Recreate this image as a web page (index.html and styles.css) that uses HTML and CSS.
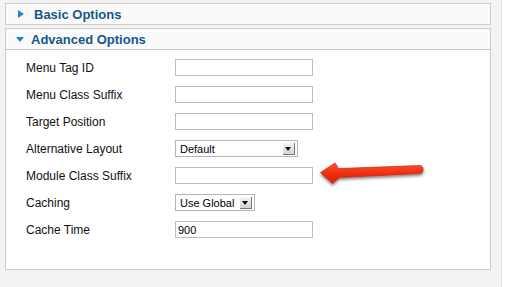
FILE: index.html
```html
<!DOCTYPE html>
<html>
<head>
  <title>Module Options</title>
  <link rel="stylesheet" href="styles.css">
</head>
<body>

  <div class="page">

    <div class="panel">
      <div class="panel-head">
        <span class="toggle closed"></span>
        <h3>Basic Options</h3>
      </div>
    </div>

    <div class="panel">
      <div class="panel-head">
        <span class="toggle open"></span>
        <h3>Advanced Options</h3>
      </div>

      <div class="panel-body">
        <div class="row">
          <label>Menu Tag ID</label>
          <input type="text" class="field">
        </div>
        <div class="row">
          <label>Menu Class Suffix</label>
          <input type="text" class="field">
        </div>
        <div class="row">
          <label>Target Position</label>
          <input type="text" class="field">
        </div>
        <div class="row">
          <label>Alternative Layout</label>
          <div class="select wide">
            <span class="select-text">Default</span>
            <span class="select-btn"></span>
          </div>
        </div>
        <div class="row">
          <label>Module Class Suffix</label>
          <input type="text" class="field">
        </div>
        <div class="row">
          <label>Caching</label>
          <div class="select narrow">
            <span class="select-text">Use Global</span>
            <span class="select-btn"></span>
          </div>
        </div>
        <div class="row">
          <label>Cache Time</label>
          <input type="text" class="field" value="900">
        </div>
      </div>
    </div>

    <!-- callout arrow pointing at Module Class Suffix -->
    <svg class="callout" width="130" height="35" viewBox="0 0 130 35">
      <defs>
        <linearGradient id="red" x1="0" y1="0" x2="0" y2="1">
          <stop offset="0" stop-color="#ff5434"/>
          <stop offset="0.5" stop-color="#ef2e10"/>
          <stop offset="1" stop-color="#d42408"/>
        </linearGradient>
        <filter id="shadow" x="-20%" y="-40%" width="140%" height="190%">
          <feDropShadow dx="0" dy="2" stdDeviation="1.5" flood-color="#000" flood-opacity="0.5"/>
        </filter>
      </defs>
      <path d="M10.5 17.5 L25 8 Q27 11 28.5 13.5 L109 10.5 A4 4 0 0 1 109.3 18.5 L29.5 22.5 Q26 25.5 22.5 28.5 Z"
            fill="url(#red)" stroke="#c01d06" stroke-width="0.6" filter="url(#shadow)"/>
    </svg>

  </div>

</body>
</html>
```

FILE: styles.css
```css
body {
  margin: 0;
  background: #fff;
  font-family: 'Liberation Sans', Arial, sans-serif;
}

.page {
  position: relative;
  width: 486px;
  height: 284px;
  padding: 3px 10px 0 5px;
  background: #f3f3f3;
  border-right: 1px solid #e2e2e2;
}

.panel {
  border: 1px solid #cccccc;
  background: #fff;
  margin-bottom: 3px;
}

.panel-head {
  display: flex;
  align-items: center;
  height: 20px;
  background: #fafafa;
}

.panel .panel-body {
  border-top: 1px solid #cccccc;
}

.panel-head h3 {
  margin: 0;
  font-size: 13px;
  font-weight: bold;
  color: #15578a;
}

.toggle {
  width: 0;
  height: 0;
}

.toggle.closed {
  margin-left: 12px;
  margin-right: 10px;
  border-top: 4px solid transparent;
  border-bottom: 4px solid transparent;
  border-left: 6px solid #1d86c8;
}

.toggle.open {
  margin-left: 10px;
  margin-right: 7px;
  border-left: 4.5px solid transparent;
  border-right: 4.5px solid transparent;
  border-top: 5px solid #1d86c8;
}

.panel-body {
  padding: 4px 0 26px 20px;
}

.row {
  display: flex;
  align-items: center;
  height: 27px;
}

.row label {
  width: 149px;
  font-size: 12px;
  color: #111;
}

.field {
  width: 138px;
  height: 17px;
  box-sizing: border-box;
  margin: 0;
  padding: 0 2px;
  border: 1px solid #bdbdbd;
  font-family: 'Liberation Sans', Arial, sans-serif;
  font-size: 11px;
  color: #000;
}

.select {
  display: flex;
  align-items: center;
  height: 17px;
  box-sizing: border-box;
  border: 1px solid #b5b5b5;
  background: #fff;
}

.select.wide {
  width: 123px;
}

.select.narrow {
  width: 80px;
}

.select-text {
  flex: 1;
  padding-left: 4px;
  font-size: 11px;
  color: #000;
}

.select-btn {
  position: relative;
  width: 12px;
  height: 12px;
  margin-right: 2px;
  background: linear-gradient(#f4f4f4, #d4d4d4);
  border-right: 1px solid #777;
  border-bottom: 1px solid #777;
  box-sizing: border-box;
}

.select-btn::after {
  content: '';
  position: absolute;
  left: 2px;
  top: 4px;
  border-left: 3px solid transparent;
  border-right: 3px solid transparent;
  border-top: 4px solid #111;
}

.callout {
  position: absolute;
  left: 310px;
  top: 155px;
}
```
